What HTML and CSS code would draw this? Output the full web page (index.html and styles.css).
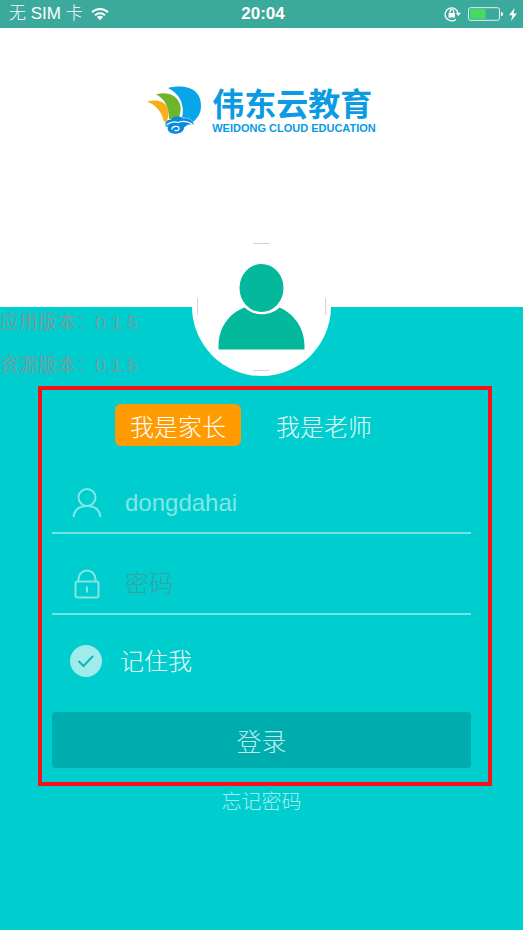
FILE: index.html
```html
<!DOCTYPE html>
<html lang="zh-CN">
<head>
<meta charset="utf-8">
<meta name="viewport" content="width=device-width, initial-scale=1">
<title>伟东云教育</title>
<link rel="stylesheet" href="styles.css">
</head>
<body>
<div class="status">
  <div class="status-side">
    <span>无 SIM 卡</span>
    <svg width="18" height="14" viewBox="0 0 18 14" aria-hidden="true"><g fill="none" stroke="#fff" stroke-width="2"><path d="M1 5.2a11.3 11.3 0 0 1 16 0"/><path d="M4 8.3a7 7 0 0 1 10 0"/></g><path d="M9 13.2 5.9 10a4.4 4.4 0 0 1 6.2 0z" fill="#fff"/></svg>
  </div>
  <strong class="clock">20:04</strong>
  <div class="status-side status-right">
    <svg width="18" height="16" viewBox="0 0 18 16" aria-hidden="true"><path d="M12 13.200a6.500 6.500 0 1 1 2-6.200" fill="none" stroke="#fff" stroke-width="1.300"/><path d="M11.500 6.800h5.500L14.200 10z" fill="#fff"/><rect x="4.500" y="7" width="6.500" height="4.500" rx=".5" fill="#fff"/><path d="M6 7V5.500a1.800 1.800 0 0 1 3.600 0V7" fill="none" stroke="#fff" stroke-width="1.200"/></svg>
    <svg width="35" height="14" viewBox="0 0 35 14" aria-hidden="true"><rect x=".5" y=".7" width="31" height="12.600" rx="2" fill="none" stroke="#e4f5f2"/><path d="M2 2.200h15.500v9.600H2z" fill="#45dc5e"/><path d="M33 4.800q2 .4 2 2.200t-2 2.200z" fill="#fff"/></svg>
    <svg width="8" height="13" viewBox="0 0 8 13" aria-hidden="true"><path d="M5.500 0 0 7.200h3.400L2 13l6-7.600H4.600z" fill="#fff"/></svg>
  </div>
</div>
<header class="hero">
  <div class="brand">
    <svg width="56" height="50" viewBox="0 0 56 50" aria-hidden="true">
      <path d="M0 16.500C9 14 18 16 20.500 23c1.500 5 .8 9-.5 13l-3 1C15 27 9 20 0 16.500z" fill="#f9ae19"/>
      <path d="M9 9.500C20 6 31 10 33.500 21c.5 5-.5 9-2 12.500L22 34C22 22 18 14 9 9.500z" fill="#6fb52c"/>
      <path d="M21 3C34-.5 54 1 54 20.500 54 28 51 33 46 37c-2-3-6-5-11-4C38 20 33 9 21 3z" fill="#08a5e8"/>
      <path d="M19 41.500c-2-4 1-7 5-7 3-4 9-4 12-1 5-1 10 2 11 6-4-1-7 0-10 3 0 5-6 7-11 6-6-1-7-7-3-9 4-3 9-1 9 2-2-1-5-1-6 1" fill="#078bdc"/>
      <path d="M20 39.500c4-3 8-3 11-2 5-2 11-1 14 1.500M25 44c0-3 7-4 7-.5 0 2-2 2.500-4 2" fill="none" stroke="#fff" stroke-width="1.300" stroke-linecap="round"/>
    </svg>
    <div class="wordmark">
      <span class="brand-cn">伟东云教育</span>
      <span class="brand-en">WEIDONG CLOUD EDUCATION</span>
    </div>
  </div>
  <div class="avatar">
    <svg viewBox="0 0 139 139" aria-hidden="true">
      <g fill="none" stroke="#d8d2d0"><path d="M61 6.500h17M61 133.500h17M5.500 61v17M133.500 61v17"/></g>
      <path d="M26.500 112.500V109c0-19 11-33 26-38.500 9 9 26 9 35 0 14 6 25 20 25 38.500v3.500z" fill="#04b99b"/>
      <ellipse cx="69.500" cy="51" rx="22" ry="24" fill="#04b99b"/>
    </svg>
  </div>
</header>
<main>
  <div class="versions">
    <p>应用版本：0.1.5</p>
    <p>资源版本：0.1.5</p>
  </div>
  <form class="login">
    <div class="roles">
      <button type="button" class="role active">我是家长</button>
      <button type="button" class="role">我是老师</button>
    </div>
    <div class="field">
      <label for="user" aria-label="用户名"><svg width="30" height="30" viewBox="0 0 30 30" fill="none" stroke="currentColor" stroke-width="2" aria-hidden="true"><circle cx="15" cy="9.500" r="8.500"/><path d="M1.500 29c1-7.500 6.500-11 13.500-11s12.500 3.500 13.500 11"/></svg></label>
      <input id="user" type="text" value="dongdahai">
    </div>
    <div class="field">
      <label for="pass" aria-label="密码"><svg width="30" height="30" viewBox="0 0 30 30" fill="none" stroke="currentColor" stroke-width="2" aria-hidden="true"><rect x="3.500" y="12.500" width="23" height="16" rx="2"/><path d="M6.500 12V10a8.500 8.500 0 0 1 17 0v2M15 17.500v6"/></svg></label>
      <input id="pass" type="password" placeholder="密码">
    </div>
    <div class="remember">
      <span class="tick">
        <input id="remember" type="checkbox" checked>
        <svg width="32" height="32" viewBox="0 0 32 32" aria-hidden="true"><path d="m8.500 16 5 5 9.500-10" fill="none" stroke="#10b6b7" stroke-width="2"/></svg>
      </span>
      <label for="remember">记住我</label>
    </div>
    <button type="submit" class="submit">登录</button>
  </form>
  <a class="forgot" href="#">忘记密码</a>
</main>
</body>
</html>
```

FILE: styles.css
```css
* { box-sizing: border-box; }

body {
  margin: 0;
  min-height: 100vh;
  background: #00cdce;
  font-family: "Liberation Sans", "Noto Sans CJK SC", sans-serif;
  font-weight: 300;
  color: #e4fafa;
}

svg { display: block; }

button, input {
  font: inherit;
  color: inherit;
  border: 0;
  background: none;
}

.status {
  display: flex;
  align-items: center;
  height: 28px;
  padding: 0 6px 0 9px;
  background: #3ba99b;
  color: #fff;
  font-size: 17px;
  line-height: 28px;
}

.status-side {
  display: flex;
  flex: 1;
  align-items: center;
  gap: 8px;
}

.status-right { justify-content: flex-end; gap: 6px; }
.clock { font-size: 17px; font-weight: 700; }

.hero {
  display: flex;
  flex-direction: column;
  align-items: center;
  height: 279px;
  padding-top: 57px;
  background: #fff;
}

.brand {
  display: flex;
  gap: 9px;
}

.wordmark {
  display: flex;
  flex-direction: column;
  color: #0a9be2;
  font-weight: 700;
  white-space: nowrap;
}

.brand-cn { font-size: 32px; line-height: 36px; padding-top: 2px; }
.brand-en { font-size: 11px; line-height: 10px; }

.avatar {
  flex: none;
  width: 139px;
  height: 139px;
  margin-top: 102px;
  border-radius: 50%;
  background: #fff;
}

.versions {
  color: #6f9fa2;
  font-size: 19px;
  font-weight: 400;
  line-height: 32px;
}

.versions p { margin: 0 0 11px; }
.versions p:last-child { margin-bottom: 4px; }

.login {
  margin: 0 31px 0 38px;
  padding: 14px 17px 14px 10px;
  border: 4px solid #fb1019;
}

.roles {
  display: flex;
  justify-content: center;
  gap: 20px;
  padding-right: 21px;
}

.role {
  width: 126px;
  height: 42px;
  padding: 0;
  border-radius: 6px;
  font-size: 24px;
}

.active { background: #ff9b00; color: #fff; }

.field {
  display: flex;
  align-items: center;
  height: 62px;
  margin-top: 19px;
  padding: 2px 0 0 20px;
  border-bottom: 2px solid #73e4e4;
  color: #83e6e6;
}

.roles + .field { margin-top: 26px; }

.field input {
  flex: 1;
  min-width: 0;
  height: 44px;
  margin-left: 23px;
  padding: 0;
  outline: 0;
  font-size: 24px;
}

.field input::placeholder { color: #3b9fa2; opacity: 1; }

.remember {
  display: flex;
  align-items: center;
  gap: 18px;
  margin-top: 30px;
  padding-left: 18px;
  font-size: 24px;
  line-height: 32px;
}

.remember label { padding-top: 2px; line-height: 30px; }

.tick { display: grid; }

.tick input {
  grid-area: 1 / 1;
  appearance: none;
  width: 32px;
  height: 32px;
  margin: 0;
  border-radius: 50%;
  background: #a0ebeb;
}

.tick svg { grid-area: 1 / 1; pointer-events: none; visibility: hidden; }
.tick input:checked + svg { visibility: visible; }

.submit {
  display: block;
  width: 100%;
  height: 56px;
  margin-top: 35px;
  border-radius: 4px;
  background: #00adae;
  color: #bceeee;
  font-size: 25px;
}

.forgot {
  display: block;
  width: max-content;
  margin: 0 auto;
  color: #a5eeee;
  font-size: 20px;
  line-height: 32px;
  text-decoration: none;
}
```
